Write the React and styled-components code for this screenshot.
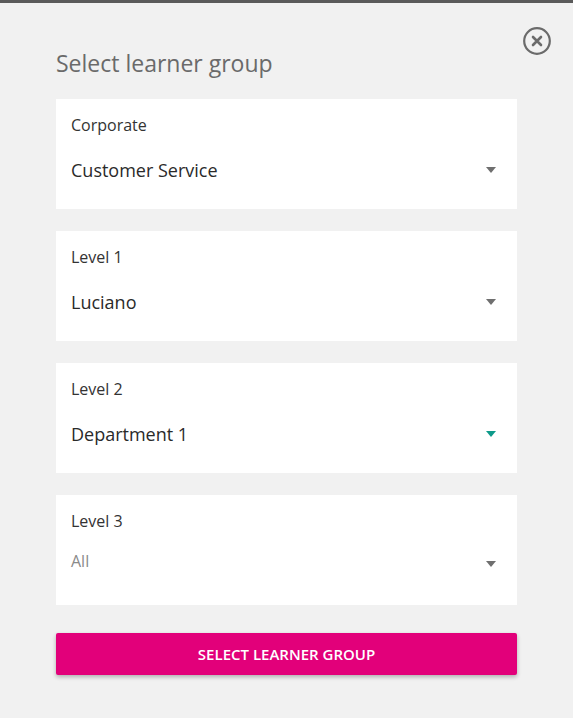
import React from "react";
import styled, { createGlobalStyle } from "styled-components";

const GlobalStyle = createGlobalStyle`
  html, body {
    margin: 0;
    padding: 0;
    background: #f1f1f1;
    font-family: "Open Sans", Lato, Arial, sans-serif;
  }
`;

const groups = [
  { label: "Corporate", value: "Customer Service" },
  { label: "Level 1", value: "Luciano" },
  { label: "Level 2", value: "Department 1", active: true },
  { label: "Level 3", value: "All", placeholder: true },
];

function CloseIcon() {
  return (
    <svg width="30" height="30" viewBox="0 0 30 30" fill="none">
      <circle cx="15" cy="15" r="12.8" stroke="#6b6b6b" strokeWidth="2.2" />
      <path d="M11 11L19 19M19 11L11 19" stroke="#6b6b6b" strokeWidth="2.6" strokeLinecap="round" />
    </svg>
  );
}

function SelectCard({ label, value, active, placeholder }) {
  return (
    <Card>
      <Label>{label}</Label>
      <ValueRow>
        <Value $placeholder={placeholder}>{value}</Value>
        <Caret $active={active} />
      </ValueRow>
    </Card>
  );
}

export default function App() {
  return (
    <>
      <GlobalStyle />
      <Page>
        <TopBar />
        <Dialog>
          <CloseButton aria-label="Close">
            <CloseIcon />
          </CloseButton>
          <Title>Select learner group</Title>
          <CardList>
            {groups.map((g) => (
              <SelectCard key={g.label} {...g} />
            ))}
          </CardList>
          <SubmitButton>Select learner group</SubmitButton>
        </Dialog>
      </Page>
    </>
  );
}

const Page = styled.div`
  width: 573px;
  height: 718px;
  background: #f1f1f1;
  overflow: hidden;
`;

const TopBar = styled.div`
  height: 3px;
  background: #5a5a5a;
`;

const Dialog = styled.div`
  position: relative;
  padding: 44px 56px 0 56px;
`;

const CloseButton = styled.button`
  position: absolute;
  top: 23px;
  right: 21px;
  padding: 0;
  border: none;
  background: none;
  display: flex;
  cursor: pointer;
`;

const Title = styled.h2`
  margin: 0 0 20px 0;
  font-size: 23px;
  font-weight: 400;
  line-height: 32px;
  color: #6a6a6a;
`;

const CardList = styled.div`
  display: flex;
  flex-direction: column;
  gap: 22px;
`;

const Card = styled.div`
  height: 110px;
  box-sizing: border-box;
  background: #fff;
  padding: 16px 15px 0 15px;
`;

const Label = styled.div`
  font-size: 16px;
  line-height: 20px;
  color: #333;
`;

const ValueRow = styled.div`
  display: flex;
  align-items: center;
  justify-content: space-between;
  margin-top: 24px;
  padding-right: 6px;
`;

const Value = styled.div`
  font-size: ${(p) => (p.$placeholder ? "16px" : "18px")};
  line-height: 22px;
  color: ${(p) => (p.$placeholder ? "#8a8a8a" : "#2a2a2a")};
  margin-top: ${(p) => (p.$placeholder ? "-5px" : "0")};
`;

const Caret = styled.span`
  width: 0;
  height: 0;
  border-left: 5.5px solid transparent;
  border-right: 5.5px solid transparent;
  border-top: 6px solid ${(p) => (p.$active ? "#0e9a8a" : "#6f6f6f")};
`;

const SubmitButton = styled.button`
  display: block;
  width: 100%;
  height: 42px;
  margin-top: 28px;
  border: none;
  border-radius: 2px;
  background: #e2007a;
  color: #fff;
  font-family: "Open Sans", Lato, Arial, sans-serif;
  font-size: 15px;
  font-weight: 600;
  text-transform: uppercase;
  box-shadow: 0 2px 4px rgba(0, 0, 0, 0.28);
  cursor: pointer;
`;
